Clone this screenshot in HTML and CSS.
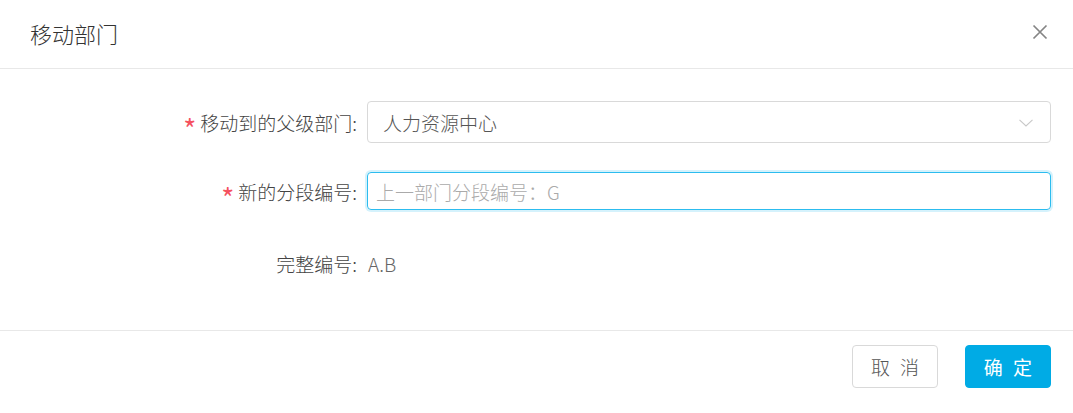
FILE: index.html
```html
<!DOCTYPE html>
<html lang="zh-CN">
<head>
<meta charset="utf-8">
<title>移动部门</title>
<link rel="stylesheet" href="styles.css">
</head>
<body>
<div class="dialog">
  <div class="dialog-header">
    <div class="dialog-title">移动部门</div>
    <button class="dialog-close" aria-label="关闭">
      <svg width="16" height="16" viewBox="0 0 16 16"><path d="M1.5 1.5 L14.5 14.5 M14.5 1.5 L1.5 14.5" stroke="#858585" stroke-width="1.7" fill="none"/></svg>
    </button>
  </div>
  <div class="dialog-body">
    <div class="form-row row-select">
      <label class="form-label"><span class="req">*</span>移动到的父级部门:</label>
      <div class="form-control select">
        <span class="select-value">人力资源中心</span>
        <svg class="select-arrow" width="14" height="8" viewBox="0 0 14 8"><path d="M0.5 0.8 L7 7 L13.5 0.8" stroke="#c8c8c8" stroke-width="1.1" fill="none"/></svg>
      </div>
    </div>
    <div class="form-row row-input">
      <label class="form-label"><span class="req">*</span>新的分段编号:</label>
      <div class="form-control input focused">
        <span class="placeholder">上一部门分段编号：G</span>
      </div>
    </div>
    <div class="form-row row-text">
      <label class="form-label">完整编号:</label>
      <div class="form-text">A.B</div>
    </div>
  </div>
  <div class="dialog-footer">
    <button class="btn btn-default">取 消</button>
    <button class="btn btn-primary">确 定</button>
  </div>
</div>
</body>
</html>
```
FILE: styles.css
```css
* { box-sizing: border-box; }
html, body { margin: 0; padding: 0; background: #fff; }
body {
  font-family: "Microsoft YaHei", "Noto Sans CJK SC", "Noto Sans", sans-serif;
  font-weight: 300;
  color: #555;
}
.dialog {
  width: 1073px;
  height: 413px;
  display: flex;
  flex-direction: column;
}
.dialog-header {
  height: 69px;
  border-bottom: 1px solid #e8e8e8;
  display: flex;
  align-items: center;
  justify-content: space-between;
  padding: 0 25px 2px 30px;
}
.dialog-title {
  font-size: 22px;
  color: #333;
  line-height: 1;
}
.dialog-close {
  border: 0;
  background: none;
  padding: 0;
  width: 16px;
  height: 16px;
  display: flex;
  cursor: pointer;
  margin-top: -2px;
}
.dialog-body {
  height: 261px;
  padding-top: 32px;
}
.form-row {
  display: flex;
  align-items: center;
}
.row-select { height: 42px; }
.row-input { height: 38px; margin-top: 29px; }
.row-text { height: 38px; margin-top: 34px; }
.form-label {
  width: 357px;
  margin-right: 10px;
  text-align: right;
  font-size: 19px;
  color: #444;
  white-space: nowrap;
  display: flex;
  justify-content: flex-end;
  align-items: center;
}
.req {
  color: #f5515f;
  font-size: 28px;
  font-weight: 400;
  line-height: 1;
  margin-right: 4px;
  position: relative;
  top: 6px;
}
.form-control {
  width: 684px;
  height: 100%;
  border: 1px solid #d9d9d9;
  border-radius: 4px;
  display: flex;
  align-items: center;
  font-size: 19px;
}
.select {
  padding: 0 17px 0 15px;
  justify-content: space-between;
  color: #555;
}
.select-arrow { display: block; margin-top: 2px; }
.input { padding: 0 8px; }
.input.focused {
  border-color: #2cbcef;
  box-shadow: 0 0 0 2px rgba(44, 188, 239, 0.2);
}
.placeholder { color: #aaa; font-size: 19px; }
.form-text {
  font-size: 19px;
  color: #666;
  padding-left: 1px;
}
.dialog-footer {
  border-top: 1px solid #e8e8e8;
  flex: 1;
  display: flex;
  justify-content: flex-end;
  align-items: flex-start;
  gap: 27px;
  padding: 14px 22px 0 0;
}
.btn {
  width: 86px;
  height: 43px;
  border-radius: 4px;
  font-family: inherit;
  font-weight: 300;
  font-size: 19px;
  padding: 0 0 0 3px;
  letter-spacing: 3px;
  cursor: pointer;
}
.btn-default {
  background: #fff;
  border: 1px solid #d9d9d9;
  color: #555;
}
.btn-primary {
  background: #00abe5;
  border: 1px solid #00abe5;
  color: #fff;
  font-weight: 400;
}
```
